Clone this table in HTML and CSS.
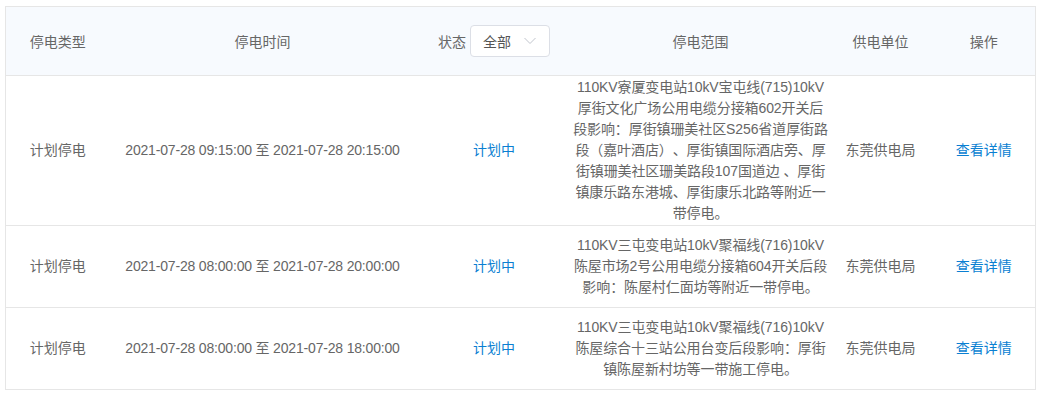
FILE: index.html
```html
<!DOCTYPE html>
<html lang="zh-CN">
<head>
<meta charset="utf-8">
<link rel="stylesheet" href="styles.css">
</head>
<body>
<div class="wrap">
<table class="grid">
  <colgroup>
    <col class="c1"><col class="c2"><col class="c3"><col class="c4"><col class="c5"><col class="c6">
  </colgroup>
  <thead>
    <tr>
      <th>停电类型</th>
      <th>停电时间</th>
      <th>
        <div class="status">
          <span>状态</span>
          <div class="select"><span>全部</span>
            <svg width="12" height="8" viewBox="0 0 12 8"><polyline points="0.5,1 6,6.5 11.5,1" fill="none" stroke="#c0c4cc" stroke-width="1"/></svg>
          </div>
        </div>
      </th>
      <th>停电范围</th>
      <th>供电单位</th>
      <th>操作</th>
    </tr>
  </thead>
  <tbody>
    <tr>
      <td>计划停电</td>
      <td class="time">2021-07-28 09:15:00 至 2021-07-28 20:15:00</td>
      <td class="blue">计划中</td>
      <td class="range">110KV寮厦变电站10kV宝屯线(715)10kV厚街文化广场公用电缆分接箱602开关后段影响：厚街镇珊美社区S256省道厚街路段（嘉叶酒店）、厚街镇国际酒店旁、厚街镇珊美社区珊美路段107国道边 、厚街镇康乐路东港城、厚街康乐北路等附近一带停电。</td>
      <td>东莞供电局</td>
      <td class="blue">查看详情</td>
    </tr>
    <tr>
      <td>计划停电</td>
      <td class="time">2021-07-28 08:00:00 至 2021-07-28 20:00:00</td>
      <td class="blue">计划中</td>
      <td class="range">110KV三屯变电站10kV聚福线(716)10kV陈屋市场2号公用电缆分接箱604开关后段影响：陈屋村仁面坊等附近一带停电。</td>
      <td>东莞供电局</td>
      <td class="blue">查看详情</td>
    </tr>
    <tr>
      <td>计划停电</td>
      <td class="time">2021-07-28 08:00:00 至 2021-07-28 18:00:00</td>
      <td class="blue">计划中</td>
      <td class="range">110KV三屯变电站10kV聚福线(716)10kV陈屋综合十三站公用台变后段影响：厚街镇陈屋新村坊等一带施工停电。</td>
      <td>东莞供电局</td>
      <td class="blue">查看详情</td>
    </tr>
  </tbody>
</table>
</div>
</body>
</html>
```

FILE: styles.css
```css
html, body {
  margin: 0;
  padding: 0;
  background: #fff;
}
body {
  font-family: "Liberation Sans", "Noto Sans CJK SC", sans-serif;
  font-size: 14px;
  color: #666;
  text-spacing-trim: space-all;
}
.wrap {
  padding: 6px 6px 0 5px;
}
.grid {
  border-collapse: collapse;
  table-layout: fixed;
  width: 1030px;
  border: 1px solid #e6e6e6;
}
.c1 { width: 104px; }
.c2 { width: 306px; }
.c3 { width: 157px; }
.c4 { width: 256px; }
.c5 { width: 104px; }
.c6 { width: 103px; }
.grid th {
  background: #f7fafe;
  font-weight: normal;
  height: 68px;
  padding: 0;
  text-align: center;
  color: #666;
  border-bottom: 1px solid #e6e6e6;
}
.grid td {
  height: 79px;
  padding: 0;
  text-align: center;
  line-height: 21px;
  border-bottom: 1px solid #e6e6e6;
  vertical-align: middle;
}
.grid td.range {
  padding: 1px 0;
  letter-spacing: -0.1px;
}
.grid td.time {
  letter-spacing: -0.18px;
}
.blue {
  color: #0a7fd2;
}
.status {
  display: flex;
  align-items: center;
  justify-content: center;
  gap: 4px;
}
.select {
  display: flex;
  align-items: center;
  justify-content: space-between;
  box-sizing: border-box;
  width: 80px;
  height: 32px;
  padding: 0 13px 0 12px;
  border: 1px solid #dcdfe6;
  border-radius: 4px;
  background: #fff;
  color: #555;
}
```
